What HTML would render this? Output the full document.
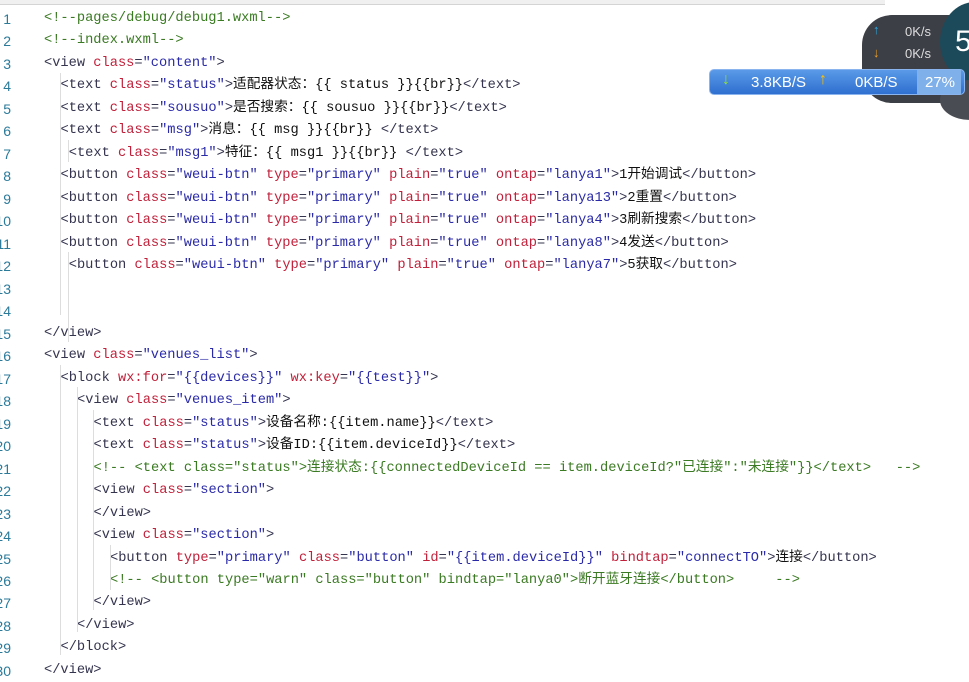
<!DOCTYPE html>
<html><head><meta charset="utf-8"><style>
body{margin:0;width:969px;height:679px;background:#fff;overflow:hidden;position:relative;font-family:"Liberation Mono","Noto Sans CJK SC",monospace;font-size:13.7px;}
.top{position:absolute;left:0;top:0;width:885px;height:4px;background:#f0f0f0;border-bottom:1px solid #d4d4d4;}
.ln{position:absolute;left:0;width:11px;text-align:right;color:#2b7a9a;overflow:hidden;direction:rtl;font-family:"Liberation Sans",sans-serif;font-size:14px;line-height:22px;height:22px;}
.l{position:absolute;white-space:pre;color:#34344f;line-height:22px;height:22px;}
.a{color:#c0203a}.v{color:#2a2aa8}.c{color:#3a7a22}.t{color:#111}
.g{position:absolute;width:1px;background:#ddd;}
</style></head><body>
<div class="top"></div>
<div id="code"></div>
<div class="g" style="left:60px;top:73px;height:242px"></div>
<div class="g" style="left:68px;top:140px;height:22px"></div>
<div class="g" style="left:68px;top:252px;height:90px"></div>
<div class="g" style="left:60px;top:365px;height:290px"></div>
<div class="g" style="left:77px;top:387px;height:245px"></div>
<div class="g" style="left:93px;top:410px;height:200px"></div>
<div class="g" style="left:110px;top:545px;height:45px"></div>

<div style="position:absolute;left:862px;top:15px;width:120px;height:88px;border-radius:30px 0 0 30px;background:#3d3f47;"></div>
<div style="position:absolute;left:873px;top:22px;color:#2aa8e0;font:bold 13px 'Liberation Sans'">↑</div>
<div style="position:absolute;left:873px;top:45px;color:#f0a020;font:bold 13px 'Liberation Sans'">↓</div>
<div style="position:absolute;left:905px;top:24px;color:#ddd;font:13px 'Liberation Sans'">0K/s</div>
<div style="position:absolute;left:905px;top:46px;color:#ddd;font:13px 'Liberation Sans'">0K/s</div>
<div style="position:absolute;left:940px;top:2px;width:70px;height:80px;border-radius:50%;background:#1c4a5a;"></div>
<div style="position:absolute;left:955px;top:25px;color:#fff;font:30px 'Liberation Sans'">5</div>
<div style="position:absolute;left:940px;top:80px;width:60px;height:40px;border-radius:50%;background:#4a4c54;"></div>
<div style="position:absolute;left:709px;top:69px;width:256px;height:26px;border-radius:5px;background:linear-gradient(#5a9ae8,#2f6fd0);border:1px solid #8ab4ee;box-sizing:border-box;"></div>
<div style="position:absolute;left:917px;top:70px;width:44px;height:24px;background:#7fb0ea;"></div>
<div style="position:absolute;left:722px;top:71px;color:#8fe03a;font:bold 16px 'Liberation Sans'">↓</div>
<div style="position:absolute;left:751px;top:74px;color:#fff;font:15px 'Liberation Sans'">3.8KB/S</div>
<div style="position:absolute;left:819px;top:71px;color:#ffc000;font:bold 16px 'Liberation Sans'">↑</div>
<div style="position:absolute;left:855px;top:74px;color:#fff;font:15px 'Liberation Sans'">0KB/S</div>
<div style="position:absolute;left:925px;top:74px;color:#fff;font:15px 'Liberation Sans'">27%</div>

<script>
const L=[
[0,'<c><!--pages/debug/debug1.wxml--></c>'],
[0,'<c><!--index.wxml--></c>'],
[0,'<view <a>class</a>=<v>"content"</v>>'],
[2,'<text <a>class</a>=<v>"status"</v>><t>适配器状态：{{ status }}{{br}}</t></text>'],
[2,'<text <a>class</a>=<v>"sousuo"</v>><t>是否搜索：{{ sousuo }}{{br}}</t></text>'],
[2,'<text <a>class</a>=<v>"msg"</v>><t>消息：{{ msg }}{{br}} </t></text>'],
[3,'<text <a>class</a>=<v>"msg1"</v>><t>特征：{{ msg1 }}{{br}} </t></text>'],
[2,'<button <a>class</a>=<v>"weui-btn"</v> <a>type</a>=<v>"primary"</v> <a>plain</a>=<v>"true"</v> <a>ontap</a>=<v>"lanya1"</v>><t>1开始调试</t></button>'],
[2,'<button <a>class</a>=<v>"weui-btn"</v> <a>type</a>=<v>"primary"</v> <a>plain</a>=<v>"true"</v> <a>ontap</a>=<v>"lanya13"</v>><t>2重置</t></button>'],
[2,'<button <a>class</a>=<v>"weui-btn"</v> <a>type</a>=<v>"primary"</v> <a>plain</a>=<v>"true"</v> <a>ontap</a>=<v>"lanya4"</v>><t>3刷新搜索</t></button>'],
[2,'<button <a>class</a>=<v>"weui-btn"</v> <a>type</a>=<v>"primary"</v> <a>plain</a>=<v>"true"</v> <a>ontap</a>=<v>"lanya8"</v>><t>4发送</t></button>'],
[3,'<button <a>class</a>=<v>"weui-btn"</v> <a>type</a>=<v>"primary"</v> <a>plain</a>=<v>"true"</v> <a>ontap</a>=<v>"lanya7"</v>><t>5获取</t></button>'],
[0,''],[0,''],
[0,'</view>'],
[0,'<view <a>class</a>=<v>"venues_list"</v>>'],
[2,'<block <a>wx:for</a>=<v>"{{devices}}"</v> <a>wx:key</a>=<v>"{{test}}"</v>>'],
[4,'<view <a>class</a>=<v>"venues_item"</v>>'],
[6,'<text <a>class</a>=<v>"status"</v>><t>设备名称:{{item.name}}</t></text>'],
[6,'<text <a>class</a>=<v>"status"</v>><t>设备ID:{{item.deviceId}}</t></text>'],
[6,'<c><!-- <text class="status">连接状态:{{connectedDeviceId == item.deviceId?"已连接":"未连接"}}</text>   --></c>'],
[6,'<view <a>class</a>=<v>"section"</v>>'],
[6,'</view>'],
[6,'<view <a>class</a>=<v>"section"</v>>'],
[8,'<button <a>type</a>=<v>"primary"</v> <a>class</a>=<v>"button"</v> <a>id</a>=<v>"{{item.deviceId}}"</v> <a>bindtap</a>=<v>"connectTO"</v>><t>连接</t></button>'],
[8,'<c><!-- <button type="warn" class="button" bindtap="lanya0">断开蓝牙连接</button>     --></c>'],
[6,'</view>'],
[4,'</view>'],
[2,'</block>'],
[0,'</view>']];
function esc(s){return s.replace(/&/g,'&amp;').replace(/</g,'&lt;').replace(/>/g,'&gt;');}
let h='';
L.forEach((x,i)=>{
 const y=8+i*22.48;
 let s=x[1];
 let out=s.replace(/<(a|v|t|c)>([\s\S]*?)<\/\1>/g,(m,k,inner)=>'\u0001'+k+'\u0002'+inner+'\u0003');
 out=esc(out).replace(/\u0001(\w)\u0002/g,'<span class="$1">').replace(/\u0003/g,'</span>');
 h+=`<div class="ln" style="top:${y}px">${i+1}</div><div class="l" style="left:${44+x[0]*8.25}px;top:${y}px">${out}</div>`;
});
document.getElementById('code').innerHTML=h;
</script>
</body></html>
